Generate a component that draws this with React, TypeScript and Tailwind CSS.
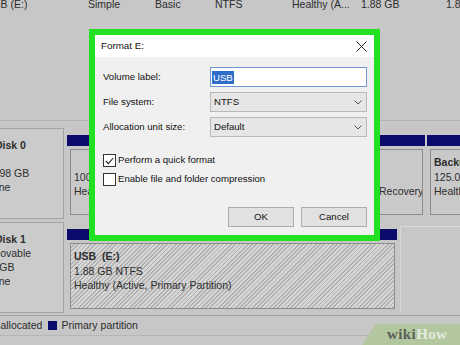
import { ReactNode } from "react";

const listCols = [
  { text: "USB (E:)", w: "w-[102px]" },
  { text: "Simple", w: "w-[67px]" },
  { text: "Basic", w: "w-[60px]" },
  { text: "NTFS", w: "w-[77px]" },
  { text: "Healthy (A...", w: "w-[69px]" },
  { text: "1.88 GB", w: "w-[85px]" },
  { text: "1.88 GB", w: "w-[60px]" },
];

function DiskLabel({ lines }: { lines: { text: string; shift: string; bold?: boolean }[] }) {
  return (
    <div className="w-[64px] shrink-0 overflow-hidden border-r border-t border-b border-[#a3a3a3] bg-[#cbcbcb] pt-[9px] leading-[14px]">
      {lines.map((l, i) => (
        <div key={i} className={`whitespace-nowrap h-[14px] ${l.shift} ${l.bold ? "font-bold" : ""}`}>
          {l.text}
        </div>
      ))}
    </div>
  );
}

function Partition({ w, children, hatched }: { w: string; children?: ReactNode; hatched?: boolean }) {
  return (
    <div className={`${w} shrink-0 flex flex-col`}>
      <div className="h-[11px] bg-[#0b0b6c]" />
      <div className="flex-1 pl-[3px] pr-[2px] pt-[3px] pb-[4px]">
        <div
          className={`h-full overflow-hidden border border-[#8c8c8c] pl-[3px] pt-[5px] leading-[14.5px] whitespace-nowrap ${
            hatched
              ? "bg-[repeating-linear-gradient(135deg,#d6d6d6_0px,#d6d6d6_1.8px,#b0b0b0_1.8px,#b0b0b0_3px)]"
              : "bg-[#c9c9c9]"
          }`}
        >
          {children}
        </div>
      </div>
    </div>
  );
}

function Field({ label, children }: { label: string; children: ReactNode }) {
  return (
    <div className="flex items-center justify-between h-[20px]">
      <span>{label}</span>
      {children}
    </div>
  );
}

function Select({ value }: { value: string }) {
  return (
    <div className="w-[157px] h-[20px] flex items-center justify-between border border-[#b9b9b9] bg-[#e6e6e6] pl-[3px] pr-[4px]">
      <span>{value}</span>
      <svg width="8" height="5" viewBox="0 0 8 5">
        <path d="M0.5 0.5 L4 4 L7.5 0.5" fill="none" stroke="#555" strokeWidth="1" />
      </svg>
    </div>
  );
}

function Check({ checked, label }: { checked?: boolean; label: string }) {
  return (
    <div className="flex items-center h-[13px]">
      <div className="w-[13px] h-[13px] border border-[#333] bg-white flex items-center justify-center">
        {checked && (
          <svg width="9" height="8" viewBox="0 0 9 8">
            <path d="M0.8 4 L3.4 6.6 L8.2 1" fill="none" stroke="#222" strokeWidth="1.1" />
          </svg>
        )}
      </div>
      <span className="ml-[2px]">{label}</span>
    </div>
  );
}

function FormatDialog() {
  return (
    <div className="absolute left-[89px] top-[29px] w-[291px] h-[212px] border-[6px] border-[#22e022] bg-[#f0f0f0] flex flex-col text-[9.6px] text-[#111]">
      <div className="h-[22px] bg-white flex items-center justify-between pl-[6px] pr-[7px] text-[9.8px]">
        <span>Format E:</span>
        <svg width="11" height="11" viewBox="0 0 11 11">
          <path d="M0.5 0.5 L10.5 10.5 M10.5 0.5 L0.5 10.5" stroke="#222" strokeWidth="1" />
        </svg>
      </div>
      <div className="flex flex-col pl-[8px] pr-[7px] pt-[10px]">
        <div className="flex flex-col gap-[5px]">
          <Field label="Volume label:">
            <div className="w-[157px] h-[20px] flex items-center border border-[#6f97d3] bg-white pl-[1px]">
              <span className="bg-[#2f6fc9] text-white px-[1px] leading-[13px]">USB</span>
            </div>
          </Field>
          <Field label="File system:">
            <Select value="NTFS" />
          </Field>
          <Field label="Allocation unit size:">
            <Select value="Default" />
          </Field>
        </div>
        <div className="mt-[17px] flex flex-col gap-[6px]">
          <Check checked label="Perform a quick format" />
          <Check label="Enable file and folder compression" />
        </div>
        <div className="mt-[21px] flex justify-end gap-[7px]">
          <button className="w-[66px] h-[20px] border border-[#adadad] bg-[#e1e1e1]">OK</button>
          <button className="w-[66px] h-[20px] border border-[#adadad] bg-[#e1e1e1]">Cancel</button>
        </div>
      </div>
    </div>
  );
}

function Watermark() {
  return (
    <div className="absolute right-0 bottom-0 w-[98px] h-[21px]">
      <svg className="absolute inset-0" width="98" height="21" viewBox="0 0 98 21">
        <polygon points="14,0 98,0 98,21 0,21" fill="#b3c79f" />
      </svg>
      <div className="relative pl-[25px] pt-[2px] font-['Liberation_Serif',serif] font-bold text-[15px] leading-[17px] tracking-[0.4px]">
        <span className="text-[#5b5f58]">wiki</span>
        <span className="text-[#e4eadf]">How</span>
      </div>
    </div>
  );
}

export default function App() {
  return (
    <div className="relative w-[460px] h-[345px] overflow-hidden bg-[#c7c7c7] font-['Liberation_Sans',Arial,sans-serif] text-[10.5px] text-[#2d2d2d]">
      {/* volume list */}
      <div className="h-[122px]">
        <div className="flex -ml-[14px] -mt-[2px] h-[12px] leading-[12px] whitespace-nowrap">
          {listCols.map((c, i) => (
            <div key={i} className={`${c.w} shrink-0`}>
              {c.text}
            </div>
          ))}
        </div>
      </div>
      <div className="h-[8px] border-t border-[#b3b3b3]" />

      {/* Disk 0 */}
      <div className="flex h-[91px]">
        <DiskLabel
          lines={[
            { text: "Disk 0", shift: "-ml-[5px]", bold: true },
            { text: "", shift: "" },
            { text: "931.98 GB", shift: "-ml-[21px]" },
            { text: "Online", shift: "-ml-[20px]" },
          ]}
        />
        <div className="flex gap-[2px] pl-[3px] pt-[7px]">
          <Partition w="w-[66px]">
            <div className="h-[14.5px]" />
            <div>100 MB</div>
            <div>Healthy (EFI System Partition)</div>
          </Partition>
          <Partition w="w-[193px]">
            <div className="font-bold">(C:)</div>
          </Partition>
          <Partition w="w-[95px]">
            <div className="h-[14.5px]" />
            <div>529 MB</div>
            <div>Healthy (Recovery Partition)</div>
          </Partition>
          <Partition w="w-[110px]">
            <div className="font-bold">Backup (D:)</div>
            <div>125.00 GB NTFS</div>
            <div>Healthy (Basic Data Partition)</div>
          </Partition>
        </div>
      </div>

      {/* Disk 1 */}
      <div className="flex h-[91px] mt-[3px]">
        <DiskLabel
          lines={[
            { text: "Disk 1", shift: "-ml-[5px]", bold: true },
            { text: "Removable", shift: "-ml-[22px]" },
            { text: "1.88 GB", shift: "-ml-[24px]" },
            { text: "Online", shift: "-ml-[20px]" },
          ]}
        />
        <div className="flex gap-[3px] pl-[3px] pt-[7px]">
          <Partition w="w-[330px]" hatched>
            <div className="font-bold">USB&nbsp;&nbsp;(E:)</div>
            <div>1.88 GB NTFS</div>
            <div>Healthy (Active, Primary Partition)</div>
          </Partition>
          <div className="w-[80px] border-l border-t border-[#dadada] mt-[-3px]" />
        </div>
      </div>

      {/* legend */}
      <div className="mt-[2px] border-t border-[#9f9f9f] h-[20px] flex items-center -ml-[13px] whitespace-nowrap">
        <span>Unallocated</span>
        <div className="ml-[6px] w-[9px] h-[9px] bg-[#0b0b6c]" />
        <span className="ml-[4px]">Primary partition</span>
      </div>
      <div className="border-t border-[#b5b5b5]" />

      <FormatDialog />
      <Watermark />
    </div>
  );
}
